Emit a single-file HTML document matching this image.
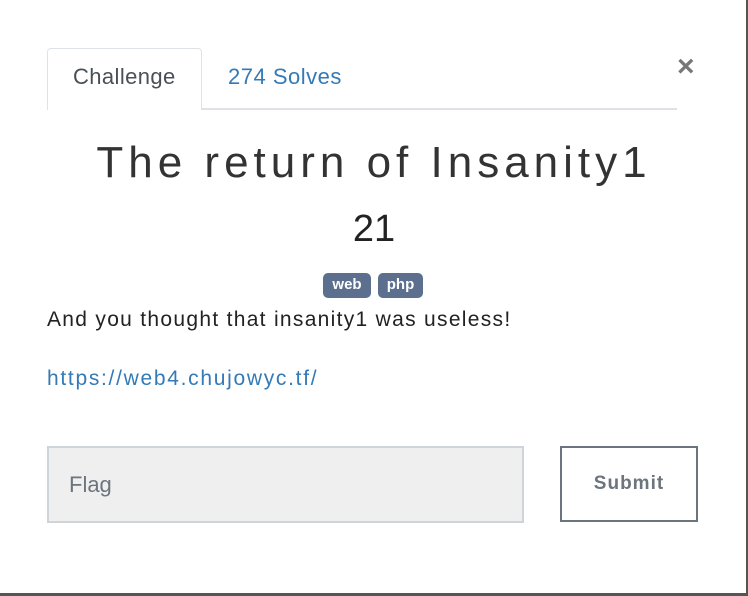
<!DOCTYPE html>
<html><head><style>
body{margin:0;width:748px;height:596px;background:#fff;position:relative;overflow:hidden;font-family:"Liberation Sans",sans-serif;}
.rb{position:absolute;right:0;top:0;width:2px;height:596px;background:#555;}
.bb{position:absolute;left:0;bottom:0;width:748px;height:3px;background:#555;}
.tabline{position:absolute;left:47px;top:108px;width:630px;height:2px;background:#dee2e6;}
.tab{position:absolute;left:47px;top:48px;width:155px;height:62px;border:1px solid #dee2e6;border-bottom:none;border-radius:4px 4px 0 0;background:#fff;box-sizing:border-box;}
.t1{position:absolute;left:73px;top:64px;font-size:22px;color:#495057;letter-spacing:0.4px;}
.t2{position:absolute;left:228px;top:64px;font-size:22px;color:#337ab7;letter-spacing:0.5px;}
.x{position:absolute;left:677px;top:50px;font-size:30px;color:#777;font-weight:bold;}
h1{position:absolute;left:0;width:748px;text-align:center;top:138px;margin:0;font-size:44px;font-weight:300;letter-spacing:5px;color:#333;}
.pts{position:absolute;left:0;width:748px;text-align:center;top:208px;font-size:38px;color:#222;}
.badge{position:absolute;top:273px;height:25px;background:#5c6f8e;color:#fff;font-weight:bold;font-size:15px;border-radius:5px;line-height:24px;text-align:center;}
.desc{position:absolute;left:47px;top:308px;font-size:21px;color:#222;letter-spacing:1.3px;}
.link{position:absolute;left:47px;top:367px;font-size:21px;color:#337ab7;letter-spacing:1.7px;}
.inp{position:absolute;left:47px;top:446px;width:477px;height:77px;box-sizing:border-box;background:#efefef;border:2px solid #ced4da;font-size:22px;color:#6c757d;padding:24px 0 0 20px;}
.btn{position:absolute;left:560px;top:446px;width:138px;height:76px;box-sizing:border-box;border:2px solid #6c757d;font-size:19px;font-weight:bold;color:#6c757d;text-align:center;line-height:72px;letter-spacing:1px;}
</style></head><body>
<div class="rb"></div><div class="bb"></div>
<div class="tabline"></div><div class="tab"></div>
<div class="t1">Challenge</div><div class="t2">274 Solves</div>
<div class="x">×</div>
<h1>The return of Insanity1</h1>
<div class="pts">21</div>
<div class="badge" style="left:323px;width:48px;">web</div>
<div class="badge" style="left:378px;width:45px;">php</div>
<div class="desc">And you thought that insanity1 was useless!</div>
<div class="link">https://web4.chujowyc.tf/</div>
<div class="inp">Flag</div>
<div class="btn">Submit</div>
</body></html>
